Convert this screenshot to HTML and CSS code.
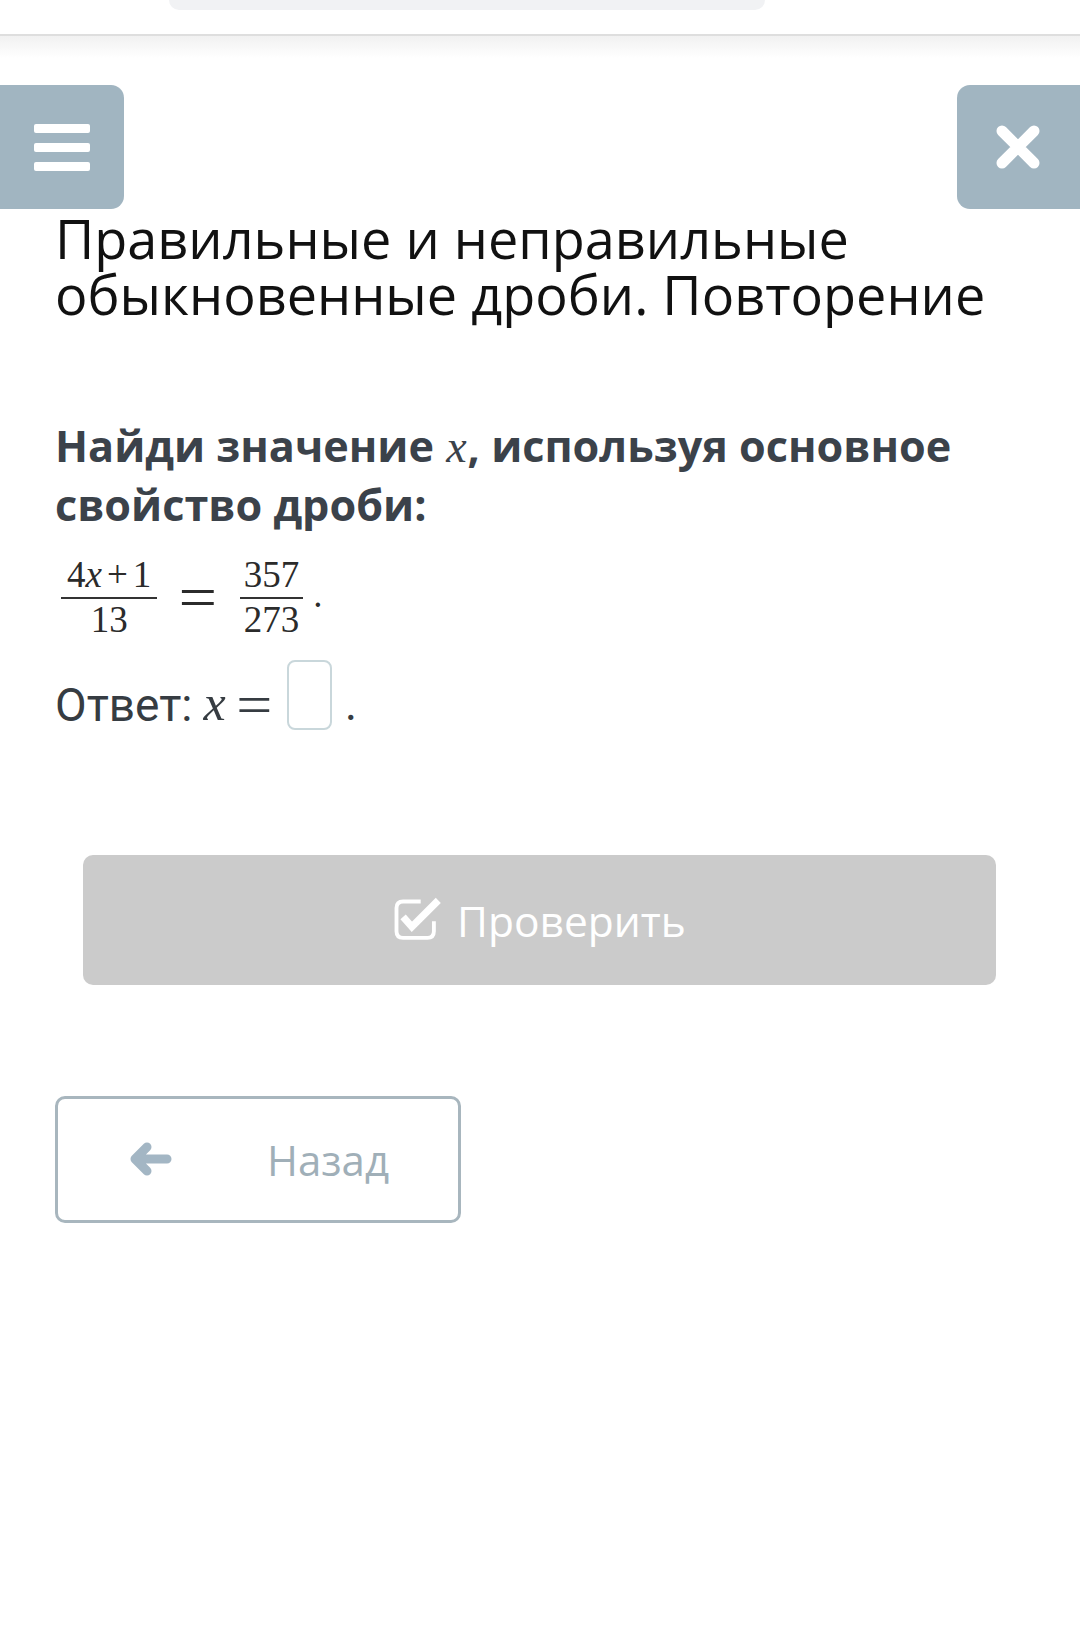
FILE: index.html
```html
<!DOCTYPE html>
<html lang="ru">
<head>
<meta charset="utf-8">
<title>Правильные и неправильные обыкновенные дроби. Повторение</title>
<link rel="stylesheet" href="styles.css">
</head>
<body>
<div class="topbar"><div class="pill"></div></div>
<div class="shade"></div>
<div class="nav">
  <button class="navbtn menu" aria-label="Меню">
    <span class="bar"></span><span class="bar"></span><span class="bar"></span>
  </button>
  <button class="navbtn close" aria-label="Закрыть">
    <svg width="48" height="46" viewBox="0 0 48 46"><path d="M8 7 L40 39 M40 7 L8 39" stroke="#fff" stroke-width="11" stroke-linecap="round"/></svg>
  </button>
</div>
<main class="content">
  <h1 class="title">Правильные и неправильные обыкновенные дроби. Повторение</h1>
  <p class="question">Найди значение <span class="mx">x</span>, используя основное свойство дроби:</p>
  <div class="eq">
    <span class="frac first"><span class="num">4<span class="mi">x</span><span class="op">+</span>1</span><span class="fbar"></span><span class="den">13</span></span>
    <span class="eqsign">=</span>
    <span class="frac second"><span class="num">357</span><span class="fbar"></span><span class="den">273</span></span>
    <span class="dot">.</span>
  </div>
  <div class="answer">
    <span class="lbl">Ответ:</span>
    <span class="ax">x</span>
    <span class="aeq">=</span>
    <span class="inbox"></span>
    <span class="adot">.</span>
  </div>
  <button class="check">
    <svg class="chk" width="51" height="44" viewBox="0 0 46 40"><path d="M25 5 H9 Q3 5 3 11 V32 Q3 38 9 38 H31 Q37 38 37 32 V23" fill="none" stroke="#fff" stroke-width="3.5"/><path d="M9 19 L17 28 L41 4" fill="none" stroke="#fff" stroke-width="6.5"/></svg>
    <span>Проверить</span>
  </button>
  <button class="back">
    <svg class="arr" width="44" height="36" viewBox="0 0 44 36"><path d="M39 18 H8 M19 6 L7 18 L19 30" fill="none" stroke="#a3b6c4" stroke-width="9" stroke-linecap="round" stroke-linejoin="round"/></svg>
    <span>Назад</span>
  </button>
</main>
</body>
</html>
```
FILE: styles.css
```css
html, body {
  margin: 0;
  padding: 0;
  background: #fff;
}
body {
  font-family: "Open Sans", "Noto Sans", sans-serif;
  width: 1080px;
}
.topbar {
  height: 34px;
  border-bottom: 2px solid #dedede;
  background: #fff;
}
.pill {
  margin-left: 169px;
  width: 596px;
  height: 10px;
  background: #f1f2f4;
  border-radius: 0 0 22px 22px;
}
.shade {
  height: 22px;
  background: linear-gradient(#f1f1f1, #ffffff);
}
.nav {
  margin-top: 27px;
  display: flex;
  justify-content: space-between;
}
.navbtn {
  border: 0;
  padding: 0;
  height: 124px;
  background: #a1b5c1;
  display: flex;
  align-items: center;
  justify-content: center;
}
.menu {
  width: 124px;
  border-radius: 0 13px 13px 0;
  flex-direction: column;
  gap: 10px;
}
.bar {
  display: block;
  width: 56px;
  height: 9px;
  background: #fff;
  border-radius: 2px;
}
.close {
  width: 123px;
  border-radius: 13px 0 0 13px;
}
.close svg {
  margin-left: -1px;
}
.content {
  padding: 0 52px 0 55px;
}
.title {
  margin: 1px 0 0;
  font-weight: 400;
  font-size: 54px;
  line-height: 56px;
  color: #111;
}
.question {
  margin: 94px 0 0;
  font-weight: 700;
  font-size: 43.2px;
  line-height: 59px;
  color: #3b424a;
}
.mx {
  font-family: "Liberation Serif", serif;
  font-style: italic;
  font-weight: 400;
  font-size: 46px;
  line-height: 1;
  margin: 0 1px;
}
.eq {
  margin-top: 22px;
  display: flex;
  align-items: center;
  height: 82px;
  padding-left: 6px;
  font-family: "Liberation Serif", serif;
  color: #2b2b2b;
}
.frac {
  display: flex;
  flex-direction: column;
  align-items: center;
  font-size: 37px;
  line-height: 37px;
}
.fbar {
  display: block;
  align-self: stretch;
  height: 2px;
  background: #333;
  margin: 4px 0 2px;
}
.first .num, .first .den {
  padding: 0 6px;
}
.second .num, .second .den {
  padding: 0 4px;
}
.mi {
  font-style: italic;
}
.op {
  padding: 0 5px;
}
.eqsign {
  font-size: 38px;
  line-height: 38px;
  display: inline-block;
  transform: scale(1.8, 1.6);
  margin: 0 31px 0 30px;
}
.dot {
  font-size: 37px;
  line-height: 37px;
  margin-left: 10px;
  margin-top: -6px;
}
.answer {
  margin-top: 22px;
  height: 70px;
  display: flex;
  align-items: flex-end;
  color: #363c42;
}
.lbl {
  font-family: Roboto, "Open Sans", sans-serif;
  font-size: 46px;
  line-height: 46px;
  margin-bottom: 2px;
}
.ax {
  font-family: "Liberation Serif", serif;
  font-style: italic;
  font-size: 50px;
  line-height: 50px;
  margin-left: 11px;
  margin-bottom: 2px;
}
.aeq {
  font-family: "Liberation Serif", serif;
  font-size: 40px;
  line-height: 40px;
  display: inline-block;
  transform: scale(1.6, 1.4);
  margin: 0 22px 4px 17px;
}
.inbox {
  display: block;
  width: 41px;
  height: 66px;
  border: 2px solid #c9d7db;
  border-radius: 8px;
}
.adot {
  font-family: "Liberation Serif", serif;
  font-size: 44px;
  line-height: 44px;
  margin-left: 13px;
  margin-bottom: 2px;
}
.check {
  display: flex;
  align-items: center;
  justify-content: center;
  gap: 13px;
  width: 913px;
  height: 130px;
  margin: 125px 0 0 28px;
  border: 0;
  border-radius: 10px;
  background: #cbcbcb;
  color: #fff;
  font-family: "Open Sans", sans-serif;
  font-size: 42.5px;
  padding: 0;
}
.chk {
  margin-top: -4px;
}
.back {
  display: flex;
  align-items: center;
  width: 406px;
  height: 127px;
  margin: 111px 0 0 0;
  border: 3px solid #a8b6be;
  border-radius: 10px;
  background: #fff;
  color: #a0afb8;
  font-family: "Open Sans", sans-serif;
  font-size: 42px;
  padding: 0 0 0 70px;
  gap: 95px;
}
.arr {
  margin-top: -2px;
}
```
